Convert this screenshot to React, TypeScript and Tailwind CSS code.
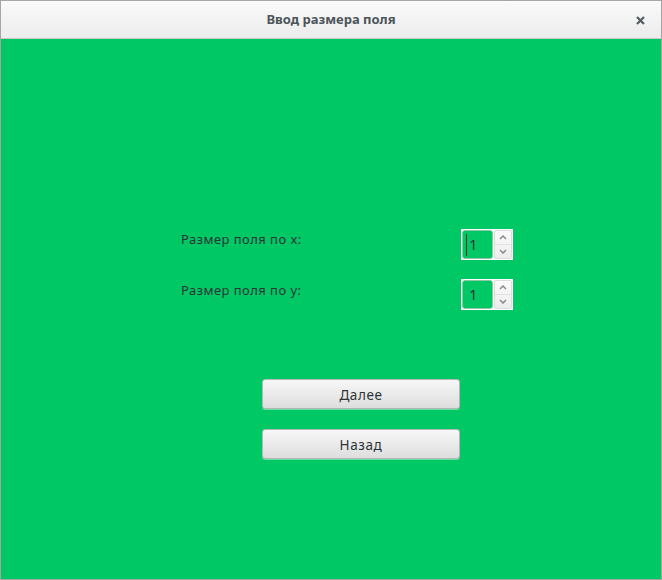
import React from "react";

const FONT = { fontFamily: '"Noto Sans", "DejaVu Sans", sans-serif' };

function Spinner({ focused }: { focused?: boolean }) {
  return (
    <div className="flex h-[31px] w-[52px] bg-white p-px">
      {/* entry */}
      <div className="relative flex h-[29px] w-[32px] items-center rounded-[3px] border border-[#8fc7a3] bg-[#00c865] pl-[6px]">
        {focused && <div className="absolute left-[3px] top-[3px] h-[22px] w-px bg-[#2e3436]" />}
        <span className="text-[15px] leading-none text-[#2e3436]">1</span>
      </div>
      {/* arrows */}
      <div className="ml-px flex w-[18px] flex-col rounded-[2px] border border-[#dcdcdc] bg-gradient-to-b from-[#fbfbfb] to-[#ededed]">
        <div className="flex flex-1 items-center justify-center border-b border-[#e2e2e2]">
          <svg width="8" height="5" viewBox="0 0 8 5">
            <path d="M1 4 L4 1 L7 4" fill="none" stroke="#8a8a8a" strokeWidth="1.5" />
          </svg>
        </div>
        <div className="flex flex-1 items-center justify-center">
          <svg width="8" height="5" viewBox="0 0 8 5">
            <path d="M1 1 L4 4 L7 1" fill="none" stroke="#8a8a8a" strokeWidth="1.5" />
          </svg>
        </div>
      </div>
    </div>
  );
}

function Button({ label }: { label: string }) {
  return (
    <button className="h-[30px] w-[198px] rounded-[3px] border border-[#b6b6b6] bg-gradient-to-b from-[#f7f7f7] to-[#dedede] pt-[2px] text-[13.5px] tracking-[0.6px] text-[#2e3436] shadow-[0_1px_0_rgba(255,255,255,0.4)]">
      {label}
    </button>
  );
}

export default function App() {
  return (
    <div style={FONT} className="flex h-[580px] w-[662px] flex-col border border-[#a6a6a6] bg-[#00c865]">
      {/* title bar */}
      <div className="relative flex h-[38px] shrink-0 items-center justify-center border-b border-[#c9c9c9] bg-gradient-to-b from-[#fafafa] to-[#ececec]">
        <span className="text-[13px] font-bold text-[#4c5559]">Ввод размера поля</span>
        <svg className="absolute right-[16px] top-[15px]" width="9" height="9" viewBox="0 0 9 9">
          <path d="M1 1 L8 8 M8 1 L1 8" stroke="#555d61" strokeWidth="2.2" />
        </svg>
      </div>

      {/* body */}
      <div className="flex flex-col pl-[180px] pt-[190px]">
        <div className="flex h-[31px] items-start">
          <span className="mt-[1px] w-[280px] text-[13px] tracking-[0.45px] text-[#2e3436]">Размер поля по x:</span>
          <Spinner focused />
        </div>
        <div className="mt-[19px] flex h-[31px] items-start">
          <span className="mt-[2px] w-[280px] text-[13px] tracking-[0.45px] text-[#2e3436]">Размер поля по y:</span>
          <Spinner />
        </div>

        <div className="ml-[81px] mt-[69px] flex flex-col gap-[20px]">
          <Button label="Далее" />
          <Button label="Назад" />
        </div>
      </div>
    </div>
  );
}
